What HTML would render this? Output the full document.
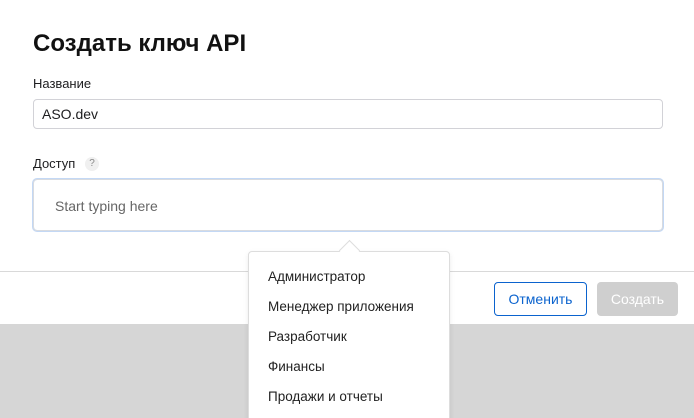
<html><head><style>
html,body{margin:0;width:694px;height:418px;overflow:hidden}
body{background:#d6d6d6;font-family:"Liberation Sans",sans-serif;position:relative;color:#1d1d1f}
.modal{position:absolute;left:0;top:0;width:694px;height:324px;background:#fff}
.a{position:absolute}
</style></head><body>
<div class="modal">
<div class="a" style="left:33px;top:30px;font-size:24px;font-weight:bold;color:#111">Создать ключ API</div>
<div class="a" style="left:33px;top:76px;font-size:13px">Название</div>
<div class="a" style="left:33px;top:99px;width:628px;height:28px;border:1px solid #d2d2d7;border-radius:4px"></div>
<div class="a" style="left:42px;top:106px;font-size:14px">ASO.dev</div>
<div class="a" style="left:33px;top:156px;font-size:13px">Доступ</div>
<div class="a" style="left:85px;top:157px;width:14px;height:14px;border-radius:7px;background:#f0f0f0;color:#888;font-size:10px;text-align:center;line-height:14px">?</div>
<div class="a" style="left:32px;top:178px;width:628px;height:50px;border:2px solid #c3d8f5;border-radius:5px"></div>
<div class="a" style="left:33px;top:179px;width:630px;height:52px;border:1px solid #d8dbe0;border-radius:4px;box-sizing:border-box"></div>
<div class="a" style="left:55px;top:198px;font-size:14px;color:#666">Start typing here</div>
<div class="a" style="left:0;top:271px;width:694px;height:1px;background:#d9d9d9"></div>
<div class="a" style="left:494px;top:282px;width:91px;height:32px;border:1px solid #0b63ce;border-radius:4px;color:#0b63ce;font-size:14px;text-align:center;line-height:32px">Отменить</div>
<div class="a" style="left:597px;top:282px;width:81px;height:34px;background:#cfcfcf;border-radius:4px;color:#fff;font-size:14px;text-align:center;line-height:34px">Создать</div>
</div>
<div class="a" style="left:248px;top:251px;width:200px;height:180px;background:#fff;border:1px solid #ddd;border-radius:4px;box-shadow:0 2px 6px rgba(0,0,0,.08)"></div>
<div class="a" style="left:342px;top:243px;width:14px;height:14px;background:#fff;border-left:1px solid #ddd;border-top:1px solid #ddd;transform:rotate(45deg)"></div>
<div class="a" style="left:268px;top:262px;font-size:13.5px;line-height:30px;color:#222">Администратор<br>Менеджер приложения<br>Разработчик<br>Финансы<br>Продажи и отчеты</div>
</body></html>
